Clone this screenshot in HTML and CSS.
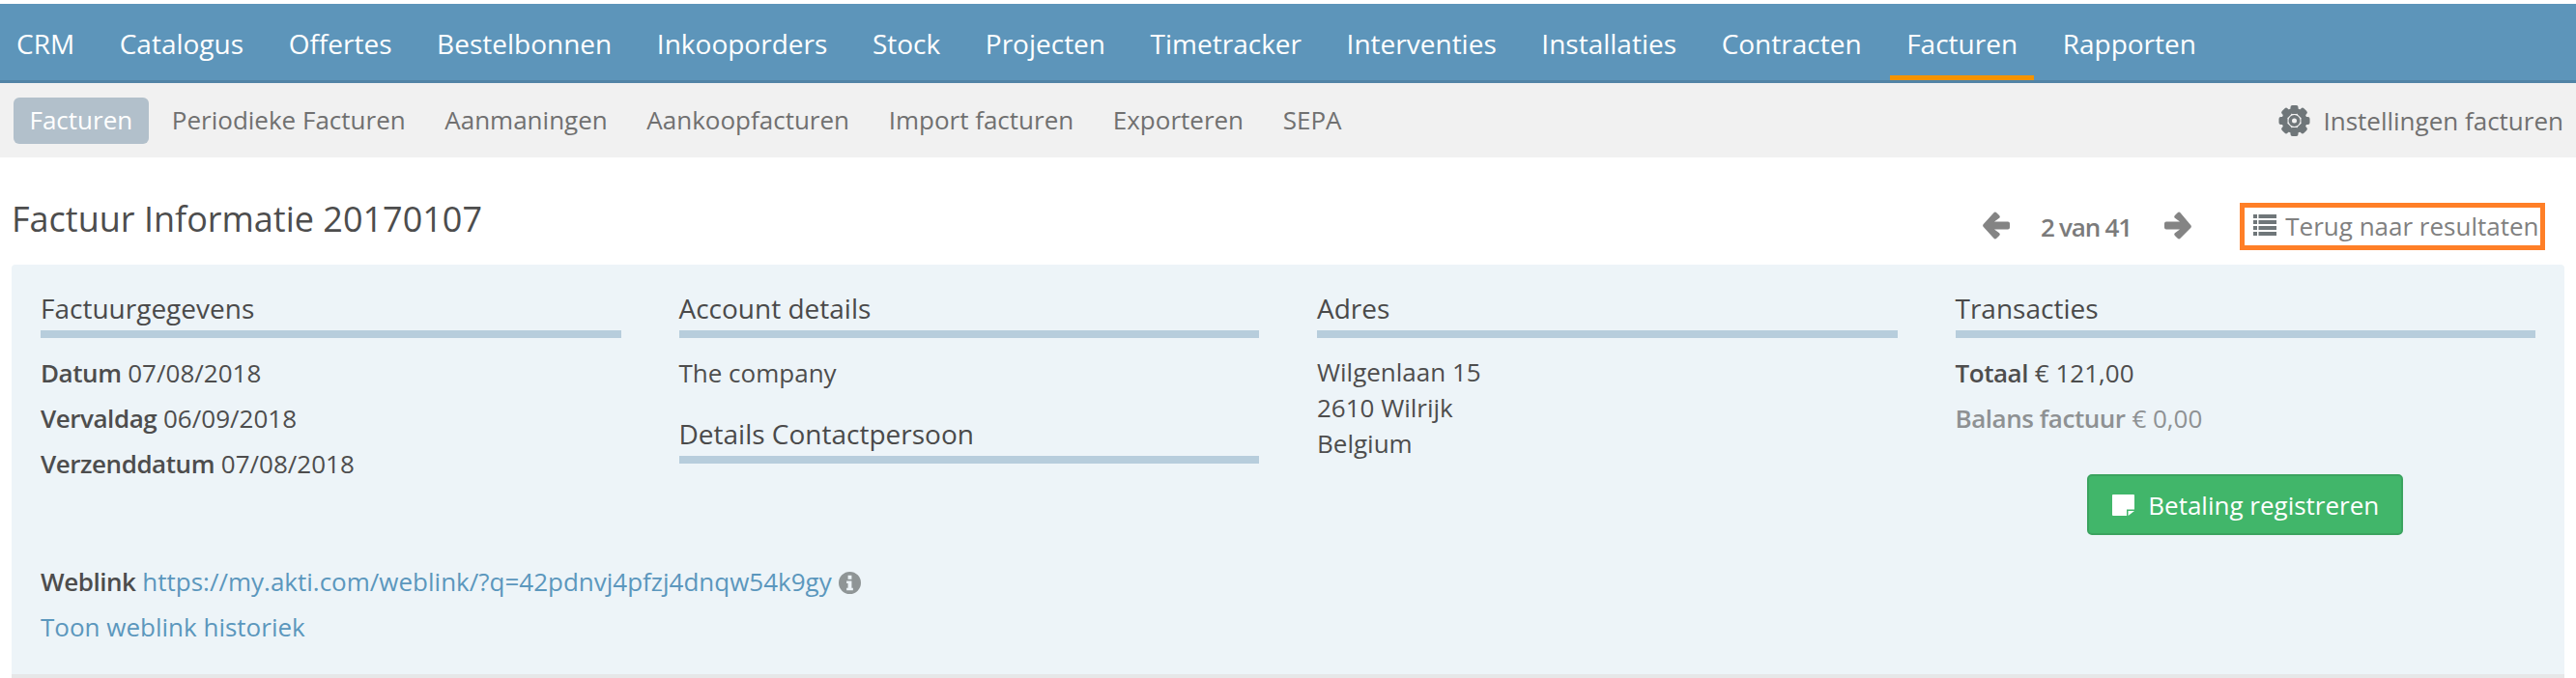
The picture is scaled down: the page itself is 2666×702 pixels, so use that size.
FILE: index.html
```html
<!DOCTYPE html>
<html lang="nl">
<head>
<meta charset="utf-8">
<title>Factuur Informatie 20170107</title>
<link rel="stylesheet" href="styles.css">
</head>
<body>
<nav class="mainnav">
  <a class="mainlink">CRM</a>
  <a class="mainlink">Catalogus</a>
  <a class="mainlink">Offertes</a>
  <a class="mainlink">Bestelbonnen</a>
  <a class="mainlink">Inkooporders</a>
  <a class="mainlink">Stock</a>
  <a class="mainlink">Projecten</a>
  <a class="mainlink">Timetracker</a>
  <a class="mainlink">Interventies</a>
  <a class="mainlink">Installaties</a>
  <a class="mainlink">Contracten</a>
  <a class="mainlink current">Facturen</a>
  <a class="mainlink">Rapporten</a>
</nav>
<nav class="subnav">
  <a class="sublink active">Facturen</a>
  <a class="sublink">Periodieke Facturen</a>
  <a class="sublink">Aanmaningen</a>
  <a class="sublink">Aankoopfacturen</a>
  <a class="sublink">Import facturen</a>
  <a class="sublink">Exporteren</a>
  <a class="sublink">SEPA</a>
  <a class="settings">
    <svg class="gear" viewBox="-16 -16 32 32">
      <g class="teeth">
        <rect x="-4" y="-16" width="8" height="9" rx="2"/>
        <rect x="-4" y="-16" width="8" height="9" rx="2" transform="rotate(45)"/>
        <rect x="-4" y="-16" width="8" height="9" rx="2" transform="rotate(90)"/>
        <rect x="-4" y="-16" width="8" height="9" rx="2" transform="rotate(135)"/>
        <rect x="-4" y="-16" width="8" height="9" rx="2" transform="rotate(180)"/>
        <rect x="-4" y="-16" width="8" height="9" rx="2" transform="rotate(225)"/>
        <rect x="-4" y="-16" width="8" height="9" rx="2" transform="rotate(270)"/>
        <rect x="-4" y="-16" width="8" height="9" rx="2" transform="rotate(315)"/>
      </g>
      <path fill-rule="evenodd" d="M0-13a13 13 0 1 1 0 26a13 13 0 1 1 0-26zM0-9a9 9 0 1 0 0 18a9 9 0 1 0 0-18zM0-6a6 6 0 1 1 0 12a6 6 0 1 1 0-12zM0-2.500a2.500 2.500 0 1 0 0 5a2.500 2.500 0 1 0 0-5z"/>
    </svg>
    Instellingen facturen
  </a>
</nav>
<header class="pagehead">
  <h1 class="title">Factuur Informatie 20170107</h1>
  <div class="tools">
    <svg class="arrow" viewBox="0 0 28 29"><path d="M11.500 1.200a2 2 0 0 1 2.800 0l2.800 2.800a2 2 0 0 1 0 2.800L12 10.500h14a2 2 0 0 1 2 2v4a2 2 0 0 1-2 2H12l5.100 3.700a2 2 0 0 1 0 2.800l-2.800 2.800a2 2 0 0 1-2.800 0L.8 15.900a2 2 0 0 1 0-2.800z"/></svg>
    <span class="count">2 van 41</span>
    <svg class="arrow" viewBox="0 0 28 29"><path d="M16.500 1.200a2 2 0 0 0-2.800 0l-2.800 2.800a2 2 0 0 0 0 2.800L16 10.500H2a2 2 0 0 0-2 2v4a2 2 0 0 0 2 2h14l-5.100 3.700a2 2 0 0 0 0 2.800l2.800 2.800a2 2 0 0 0 2.800 0l10.700-10.900a2 2 0 0 0 0-2.800z"/></svg>
    <a class="back">
      <svg class="listicon" viewBox="0 0 24 22"><path d="M0 0h4v4H0zM5.500 0H24v4H5.500zM0 6h4v4H0zM5.500 6H24v4H5.500zM0 12h4v4H0zM5.500 12H24v4H5.500zM0 18h4v4H0zM5.500 18H24v4H5.500z"/></svg>
      Terug naar resultaten
    </a>
  </div>
</header>
<main class="panel">
  <div class="columns">
    <section>
      <h2 class="heading">Factuurgegevens</h2>
      <p class="row"><b>Datum</b> 07/08/2018</p>
      <p class="row"><b>Vervaldag</b> 06/09/2018</p>
      <p class="row"><b>Verzenddatum</b> 07/08/2018</p>
    </section>
    <section>
      <h2 class="heading">Account details</h2>
      <p class="row">The company</p>
      <h2 class="heading second">Details Contactpersoon</h2>
    </section>
    <section>
      <h2 class="heading">Adres</h2>
      <p class="address">Wilgenlaan 15<br>2610 Wilrijk<br>Belgium</p>
    </section>
    <section>
      <h2 class="heading">Transacties</h2>
      <p class="row"><b>Totaal</b> € 121,00</p>
      <p class="row muted"><b>Balans factuur</b> € 0,00</p>
      <div class="actions">
        <a class="button">
          <svg class="note" viewBox="0 0 23 22"><path d="M1 0h21a1 1 0 0 1 1 1v14.500h-8v6.500H1a1 1 0 0 1-1-1V1a1 1 0 0 1 1-1zM16.500 17H23l-6.500 5z"/></svg>
          Betaling registreren
        </a>
      </div>
    </section>
  </div>
  <p class="row"><b>Weblink</b> <a class="link">https://my.akti.com/weblink/?q=42pdnvj4pfzj4dnqw54k9gy</a> <svg class="info" viewBox="0 0 24 24"><path fill-rule="evenodd" d="M12 0a12 12 0 1 1 0 24 12 12 0 0 1 0-24zM10 4v4h4V4zM8.500 10v2.500H10v5H8.500V20h7v-2.500H14V10z"/></svg></p>
  <p class="row"><a class="link">Toon weblink historiek</a></p>
</main>
</body>
</html>
```
FILE: styles.css
```css
* { box-sizing: border-box; }
html, body { margin: 0; padding: 0; }
body {
  padding-top: 4px;
  background: #fff;
  color: #4d4d4d;
  font-family: "Open Sans", sans-serif;
  font-size: 26px;
  height: 702px;
  overflow: hidden;
}
.mainnav {
  display: flex;
  height: 82px;
  background: #5d95ba;
  border-bottom: 3px solid #5284a6;
  gap: 12.6px;
}
.mainlink {
  padding: 0 17px;
  height: 79px;
  line-height: 82px;
  font-size: 28px;
  color: #fff;
}
.current {
  box-shadow: inset 0 -5px 0 #f59300;
}
.subnav {
  display: flex;
  align-items: center;
  height: 77px;
  padding: 0 14px;
  gap: 7.6px;
  background: #f1f1f1;
}
.sublink {
  padding: 0 16.5px;
  height: 48px;
  line-height: 47px;
  color: #707070;
  border-radius: 6px;
}
.active { background: #b2c0cb; color: #fff; }
.settings {
  margin-left: auto;
  display: flex;
  align-items: center;
  gap: 13px;
  color: #707070;
  margin-right: -1px;
}
.gear { width: 33px; height: 32px; fill: #6f7679; }
.pagehead {
  display: flex;
  justify-content: space-between;
  height: 111px;
  padding: 0 32px 0 12px;
}
.title {
  margin: 40px 0 0;
  font-size: 36px;
  font-weight: 400;
  line-height: 48px;
}
.tools { display: flex; align-items: center; height: 49px; margin-top: 47px; }
.arrow { width: 28px; height: 29px; fill: #848484; margin-top: -3px; }
.count { margin: 0 34px 0 32px; font-size: 26px; font-weight: 600; color: #7b7b7b; letter-spacing: -1.2px; }
.back {
  display: flex;
  align-items: center;
  height: 49px;
  margin-left: 50.4px;
  padding: 0 1.5px 2px 9px;
  gap: 9px;
  border: 5px solid #ff7f27;
  color: #808080;
}
.listicon { width: 24px; height: 22px; fill: #6f7679; margin-top: -2px; }
.panel {
  margin: 0 12px;
  height: 424px;
  padding: 30px 30px 0;
  background: #edf4f8;
  border-radius: 4px 4px 0 0;
  box-shadow: 0 4px 0 #e6e7e8;
}
.columns {
  display: grid;
  grid-template-columns: repeat(4, 600.5px);
  gap: 60px;
  height: 281px;
}
.heading {
  margin: 0 0 18.5px;
  height: 46px;
  line-height: 30px;
  font-size: 28px;
  font-weight: 400;
  border-bottom: 8px solid #b7cddc;
  color: #4a4a4a;
}
.second { margin-top: 18.5px; }
.row { margin: 0; height: 47px; line-height: 34px; }
b { font-weight: 600; letter-spacing: -0.45px; }
.address { margin: -1.5px 0 0; line-height: 37px; }
.muted { color: #8e9193; }
.actions { display: flex; justify-content: center; margin-top: 28.5px; }
.button {
  display: flex;
  align-items: center;
  gap: 14px;
  width: 327px;
  height: 63px;
  padding-left: 24px;
  background: #41b66a;
  border: 2px solid #3ba35f;
  border-radius: 5px;
  color: #fff;
}
.note { width: 23px; height: 22px; fill: #fff; }
.link { color: #5b97bd; }
.info { width: 23px; height: 23px; fill: #8f9596; vertical-align: -3px; }
```
